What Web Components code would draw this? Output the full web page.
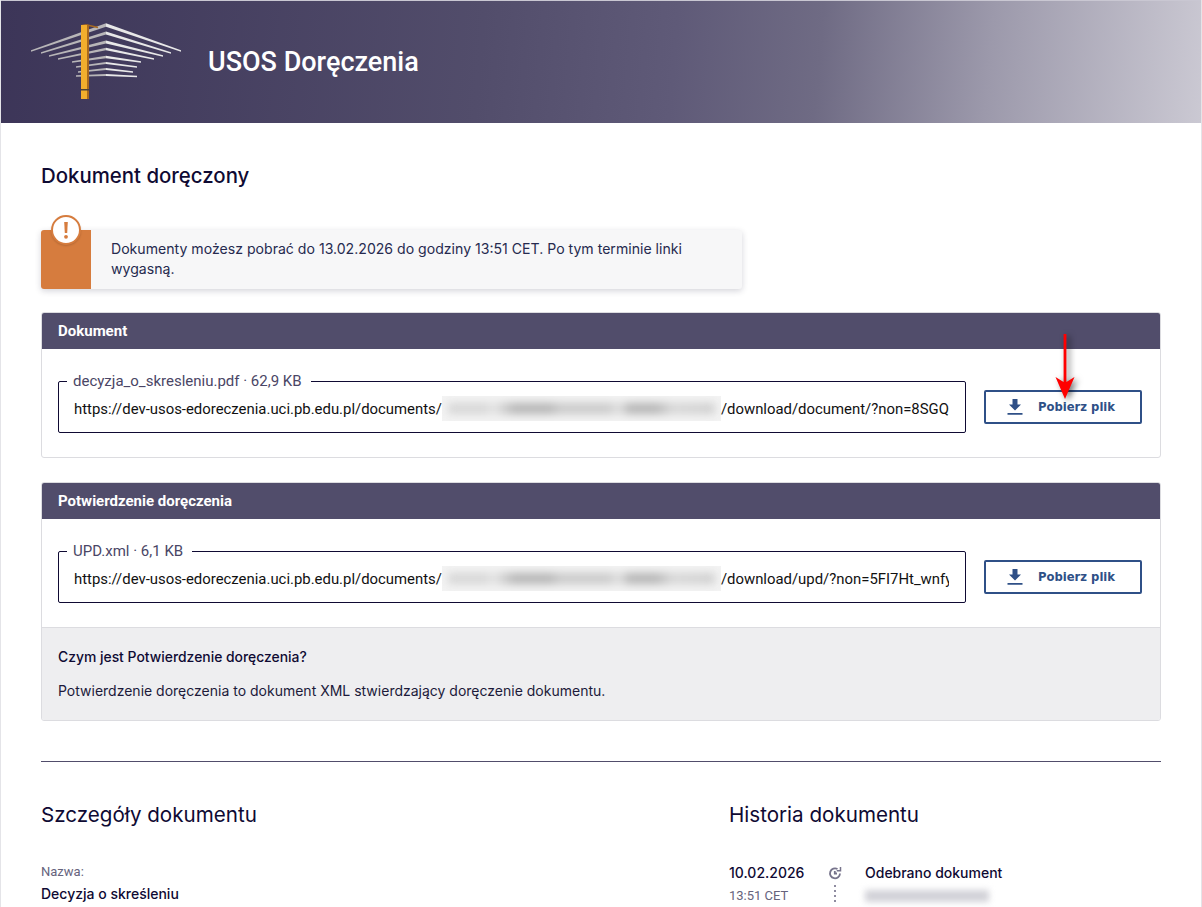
<!DOCTYPE html>
<html lang="pl">
<head>
<meta charset="utf-8">
<title>USOS Doręczenia</title>
<style>
    html, body { margin: 0; padding: 0; background: #fff; }
    body { font-family: Inter, "Noto Sans", sans-serif; color: #0f0a33; height: 907px; overflow: hidden; }
</style>
</head>
<body>
<app-page>
    <app-header slot="header" title="USOS Doręczenia"></app-header>
    <h-title>Dokument doręczony</h-title>
    <warn-box>Dokumenty możesz pobrać do 13.02.2026 do godziny 13:51 CET. Po tym terminie linki wygasną.</warn-box>
    <doc-panel heading="Dokument" style="margin-top: 23px">
        <link-row legend="decyzja_o_skresleniu.pdf · 62,9 KB" pre="https://dev-usos-edoreczenia.uci.pb.edu.pl/documents/" post="/download/document/?non=8SGQ"></link-row>
    </doc-panel>
    <doc-panel heading="Potwierdzenie doręczenia">
        <link-row legend="UPD.xml · 6,1 KB" pre="https://dev-usos-edoreczenia.uci.pb.edu.pl/documents/" post="/download/upd/?non=5FI7Ht_wnfy"></link-row>
        <panel-note slot="note" heading="Czym jest Potwierdzenie doręczenia?">Potwierdzenie doręczenia to dokument XML stwierdzający doręczenie dokumentu.</panel-note>
    </doc-panel>
    <details-section></details-section>
    <red-arrow></red-arrow>
</app-page>

<script>
class AppPage extends HTMLElement {
    constructor() {
        super();
        this.attachShadow({ mode: 'open' });
        this.shadowRoot.innerHTML = `
            <style>
                :host {
                    display: block;
                    position: relative;
                    box-sizing: border-box;
                    width: 1202px;
                    height: 907px;
                    overflow: hidden;
                    border-left: 1px solid #e4e4e8;
                    border-right: 1px solid #e4e4e8;
                }
                main {
                    display: flex;
                    flex-direction: column;
                    padding: 0 40px;
                }
            </style>
            <slot name="header"></slot>
            <main><slot></slot></main>
        `;
    }
}

class AppHeader extends HTMLElement {
    constructor() {
        super();
        this.attachShadow({ mode: 'open' });
    }

    connectedCallback() {
        const title = this.getAttribute('title') || '';
        // Slats of the logo in page coords: [left x, left y, centre y, right x, right y, width at centre]
        const slats = [
            [31, 51, 25, 181, 51, 3.4],
            [41, 53, 33, 171, 53, 3],
            [49, 56, 42, 163, 56, 2.8],
            [58, 59, 49, 154, 59, 2.6],
            [72, 62, 57, 141, 62, 2.4],
            [76, 67, 63, 137, 67, 2.2],
            [78, 72, 69, 133, 72, 2.2],
            [76, 76, 75, 137, 76.500, 2.2]
        ];
        const slatShapes = slats.map(s => {
            const top = s[2] - s[5] / 2;
            const bottom = s[2] + s[5] / 2;
            // Slats taper towards the ends but stay about a pixel thick
            return `
            <path d="M${s[0]} ${s[1] - 0.7}L106 ${top}V${bottom}L${s[0]} ${s[1] + 0.7}Z" fill="#b8b6b8"/>
            <path d="M106 ${top}L${s[3]} ${s[4] - 0.7}V${s[4] + 0.7}L106 ${bottom}Z" fill="#e8e8e8"/>`;
        }).join('');

        this.shadowRoot.innerHTML = `
            <style>
                :host {
                    display: flex;
                    align-items: center;
                    box-sizing: border-box;
                    height: 123px;
                    margin-left: -1px;
                    margin-right: -1px;
                    padding: 0 0 0 30px;
                    gap: 24px;
                    border-top: 1px solid #c9c7d2;
                    background: linear-gradient(95deg, #3c3558 0%, #524d6b 40%, #5f5a78 56%, #6f6b84 68%, #9c99ab 82%, #cbc9d3 100%);
                }
                svg { display: block; flex: none; }
                h1 {
                    margin: 0;
                    font: 500 27px Roboto, sans-serif;
                    color: #fff;
                }
            </style>
            <svg width="154" height="80" viewBox="30 22 154 80" aria-hidden="true">
                ${slatShapes}
                <path d="M87 25L98 27.500" stroke="#a8691f" stroke-width="1.500" fill="none"/>
                <path d="M81 25L86 24L89 25V99H81Z" fill="#a8691f"/>
                <rect x="81" y="25" width="6" height="74" fill="#f2ae2d"/>
                <rect x="81" y="89" width="8" height="1.500" fill="#4d4238"/>
            </svg>
            <h1>${title}</h1>
        `;
    }
}

class HTitle extends HTMLElement {
    constructor() {
        super();
        this.attachShadow({ mode: 'open' });
        this.shadowRoot.innerHTML = `
            <style>
                :host {
                    display: block;
                    margin-top: 40px;
                    font: 500 20.4px/26px Inter, sans-serif;
                    color: #0f0a33;
                }
            </style>
            <slot></slot>
        `;
    }
}

class WarnBox extends HTMLElement {
    constructor() {
        super();
        this.attachShadow({ mode: 'open' });
        this.shadowRoot.innerHTML = `
            <style>
                :host {
                    display: flex;
                    width: 701px;
                    height: 59px;
                    margin-top: 41px;
                    position: relative;
                    background: #f7f7f8;
                    border-radius: 3px;
                    box-shadow: 0 2px 6px rgba(40, 40, 70, .2);
                }
                .side {
                    flex: none;
                    position: relative;
                    width: 50px;
                    background: #d67c3e;
                    border-radius: 3px 0 0 3px;
                }
                .badge {
                    position: absolute;
                    left: 10px;
                    top: -15px;
                    box-sizing: border-box;
                    width: 30px;
                    height: 30px;
                    border-radius: 50%;
                    background: #fff;
                    border: 2px solid #d67c3e;
                    box-shadow: 0 1px 2px rgba(0,0,0,.15);
                }
                .badge svg { display: block; margin: 5px auto 0; }
                .text {
                    padding: 9px 40px 0 20px;
                    font: 400 14.1px/20px Inter, sans-serif;
                    color: #262a4f;
                }
            </style>
            <div class="side">
                <div class="badge">
                    <svg width="6" height="17" viewBox="0 0 6 17"><path d="M1.200 0h3.600l-.6 11H1.800Z" fill="#d67c3e"/><circle cx="3" cy="14.800" r="1.900" fill="#d67c3e"/></svg>
                </div>
            </div>
            <div class="text"><slot></slot></div>
        `;
    }
}

class DocPanel extends HTMLElement {
    constructor() {
        super();
        this.attachShadow({ mode: 'open' });
    }

    connectedCallback() {
        this.shadowRoot.innerHTML = `
            <style>
                :host {
                    display: block;
                    margin-top: 24px;
                    border: 1px solid #dcdce0;
                    border-radius: 3px;
                    overflow: hidden;
                }
                .head {
                    height: 36px;
                    padding: 0 16px;
                    background: #514d6b;
                    color: #fff;
                    font: 700 15px/36px Roboto, sans-serif;
                }
                .body { padding: 32px 18px 24px 16px; }
            </style>
            <div class="head">${this.getAttribute('heading') || ''}</div>
            <div class="body"><slot></slot></div>
            <slot name="note"></slot>
        `;
    }
}

class LinkRow extends HTMLElement {
    constructor() {
        super();
        this.attachShadow({ mode: 'open' });
    }

    connectedCallback() {
        this.shadowRoot.innerHTML = `
            <style>
                :host {
                    display: flex;
                    align-items: center;
                    justify-content: space-between;
                }
                fieldset {
                    box-sizing: border-box;
                    width: 908px;
                    height: 60px;
                    margin: -8px 0 0;
                    padding: 0 16px 0 15px;
                    border: 1px solid #0f0a33;
                    border-radius: 2px;
                    min-inline-size: 0;
                }
                legend {
                    padding: 0 9px 0 6px;
                    margin-left: -7px;
                    font: 400 15px/16px Roboto, sans-serif;
                    color: #4a4666;
                    white-space: nowrap;
                }
                .url {
                    display: flex;
                    align-items: center;
                    margin-top: 7px;
                    height: 25px;
                    overflow: hidden;
                    font: 400 14.9px/22px Roboto, sans-serif;
                    color: #111;
                    white-space: nowrap;
                }
                .blur {
                    flex: none;
                    width: 279px;
                    height: 25px;
                    overflow: hidden;
                    background: #f3f3f3;
                }
                /* Blurred copy of the redacted part of the link */
                .blur i {
                    display: block;
                    height: 11px;
                    margin: 7px 6px;
                    filter: blur(4px);
                    background: linear-gradient(90deg, #d6d6d6 0 14%, #e4e4e4 17%, #b4b4b4 25% 38%, #c9c9c9 42% 60%, #e0e0e0 64%, #b4b4b4 68% 78%, #d6d6d6 84%, #cfcfcf 100%);
                }
            </style>
            <fieldset>
                <legend>${this.getAttribute('legend') || ''}</legend>
                <div class="url"><span>${this.getAttribute('pre') || ''}</span><span class="blur"><i></i></span><span>${this.getAttribute('post') || ''}</span></div>
            </fieldset>
            <dl-button>Pobierz plik</dl-button>
        `;
    }
}

class DlButton extends HTMLElement {
    constructor() {
        super();
        this.attachShadow({ mode: 'open' });
        this.shadowRoot.innerHTML = `
            <style>
                :host {
                    display: flex;
                    align-items: center;
                    box-sizing: border-box;
                    width: 158px;
                    height: 34px;
                    padding-left: 21px;
                    border: 2px solid #2f5087;
                    border-radius: 2px;
                    color: #2f5087;
                    font: 700 11.6px "DejaVu Sans", sans-serif;
                }
                svg { display: block; flex: none; margin-right: 15px; }
            </style>
            <svg width="16" height="17" viewBox="0 0 16 17" aria-hidden="true"><path d="M5.500 0h5v5.500h3.500L8 11.500 2 5.500h3.500ZM0.500 14h15v1.700H.5Z" fill="#2f5087"/></svg>
            <slot></slot>
        `;
    }
}

class PanelNote extends HTMLElement {
    constructor() {
        super();
        this.attachShadow({ mode: 'open' });
    }

    connectedCallback() {
        this.shadowRoot.innerHTML = `
            <style>
                :host {
                    display: block;
                    height: 93px;
                    box-sizing: border-box;
                    padding: 19px 16px 0;
                    background: #eeeef0;
                    border-top: 1px solid #dcdce0;
                }
                b {
                    display: block;
                    font: 500 13.9px/20px Inter, sans-serif;
                    color: #0f0a33;
                }
                p {
                    margin: 14px 0 0;
                    font: 400 14px/20px Inter, sans-serif;
                    color: #1c1a3a;
                }
            </style>
            <b>${this.getAttribute('heading') || ''}</b>
            <p><slot></slot></p>
        `;
    }
}

class DetailsSection extends HTMLElement {
    constructor() {
        super();
        this.attachShadow({ mode: 'open' });
        this.shadowRoot.innerHTML = `
            <style>
                :host {
                    display: grid;
                    grid-template-columns: 688px 1fr;
                    margin-top: 40px;
                    padding-top: 40px;
                    border-top: 1px solid #514d6b;
                    color: #0f0a33;
                }
                h2 {
                    margin: 0 0 36px;
                    font: 400 20.6px/26px Inter, sans-serif;
                }
                .label {
                    font: 400 13px/16px Roboto, sans-serif;
                    color: #66637d;
                }
                .value {
                    margin-top: 4px;
                    font: 500 14px/20px Inter, sans-serif;
                }
                .event {
                    display: grid;
                    grid-template-columns: 76px 60px 1fr;
                }
                .date { font: 500 14px/18px Inter, sans-serif; }
                .time {
                    margin-top: 6px;
                    font: 400 13px/16px Roboto, sans-serif;
                    color: #66637d;
                }
                .track {
                    display: flex;
                    flex-direction: column;
                    align-items: center;
                    width: 14px;
                    padding-top: 2px;
                    margin-left: 23px;
                }
                .track svg { display: block; }
                .dots {
                    width: 2px;
                    height: 20px;
                    margin-top: 5px;
                    background: repeating-linear-gradient(#8f8ca0 0 2px, transparent 2px 5px);
                }
                .what { font: 500 14px/18px Inter, sans-serif; }
                .who {
                    width: 124px;
                    height: 12px;
                    margin-top: 8px;
                    background: #d2d2d8;
                    filter: blur(3px);
                }
            </style>
            <div>
                <h2>Szczegóły dokumentu</h2>
                <div class="label">Nazwa:</div>
                <div class="value">Decyzja o skreśleniu</div>
            </div>
            <div>
                <h2>Historia dokumentu</h2>
                <div class="event">
                    <div>
                        <div class="date">10.02.2026</div>
                        <div class="time">13:51 CET</div>
                    </div>
                    <div class="track">
                        <svg width="14" height="14" viewBox="0 0 14 14" fill="none" stroke="#77748c" stroke-width="1.800"><path d="M12 7.500A5 5 0 1 1 9.500 3"/><path d="M9 7.500H6.800V5"/><path d="M12.500 1v3.800h-3.800" stroke-width="1.500"/></svg>
                        <div class="dots"></div>
                    </div>
                    <div>
                        <div class="what">Odebrano dokument</div>
                        <div class="who"></div>
                    </div>
                </div>
            </div>
        `;
    }
}

class RedArrow extends HTMLElement {
    constructor() {
        super();
        this.attachShadow({ mode: 'open' });
        this.shadowRoot.innerHTML = `
            <style>
                :host {
                    position: absolute;
                    left: 1054px;
                    top: 333px;
                    width: 20px;
                    height: 68px;
                    filter: drop-shadow(3px 2px 3px rgba(0,0,0,.55));
                }
                svg { display: block; }
            </style>
            <svg width="20" height="68" viewBox="0 0 20 68" aria-hidden="true"><path d="M8.600 1h2.800v48l8.100 -5 -9.500 22 -9.500 -22 8.100 5Z" fill="#f00"/></svg>
        `;
    }
}

customElements.define('app-page', AppPage);
customElements.define('app-header', AppHeader);
customElements.define('h-title', HTitle);
customElements.define('warn-box', WarnBox);
customElements.define('doc-panel', DocPanel);
customElements.define('link-row', LinkRow);
customElements.define('dl-button', DlButton);
customElements.define('panel-note', PanelNote);
customElements.define('details-section', DetailsSection);
customElements.define('red-arrow', RedArrow);
</script>
</body>
</html>
